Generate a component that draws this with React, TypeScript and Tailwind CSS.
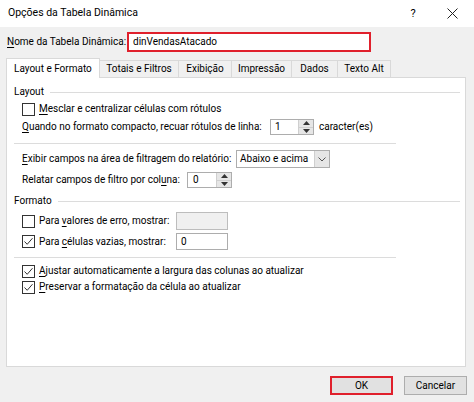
import React from "react";

const font = { fontFamily: 'Roboto, "Noto Sans", sans-serif' };

function CheckBox({ checked }: { checked?: boolean }) {
  return (
    <span className="w-[13px] h-[13px] border border-[#333] bg-white flex items-center justify-center shrink-0">
      {checked && (
        <svg width="11" height="11" viewBox="0 0 11 11">
          <path d="M1.5 5.5 L4.2 8.3 L9.5 2.2" fill="none" stroke="#333" strokeWidth="1" />
        </svg>
      )}
    </span>
  );
}

function Spinner() {
  return (
    <div className="w-[15px] h-full flex flex-col bg-[#e6e6e6] border-l border-[#cfcfcf]">
      <div className="flex-1 flex items-center justify-center border-b border-[#cfcfcf]">
        <svg width="7" height="4" viewBox="0 0 7 4">
          <path d="M0 4 L3.5 0 L7 4 Z" fill="#333" />
        </svg>
      </div>
      <div className="flex-1 flex items-center justify-center">
        <svg width="7" height="4" viewBox="0 0 7 4">
          <path d="M0 0 L3.5 4 L7 0 Z" fill="#333" />
        </svg>
      </div>
    </div>
  );
}

function U({ children }: { children: React.ReactNode }) {
  return <span className="underline underline-offset-2">{children}</span>;
}

function GroupTitle({ title }: { title: string }) {
  return (
    <div className="h-[16px] flex items-center pl-[7px] pr-[5px]">
      <span>{title}</span>
      <div className="flex-1 h-px bg-[#dcdcdc] ml-[6px]" />
    </div>
  );
}

function CheckRow({ checked, children }: { checked?: boolean; children: React.ReactNode }) {
  return (
    <div className="h-[16px] flex items-center pl-[15px] gap-[4px]">
      <CheckBox checked={checked} />
      <span>{children}</span>
    </div>
  );
}

const tabs = [
  { label: "Totais e Filtros", w: "w-[79px]" },
  { label: "Exibição", w: "w-[53px]" },
  { label: "Impressão", w: "w-[60px]" },
  { label: "Dados", w: "w-[46px]" },
  { label: "Texto Alt", w: "w-[53px]" },
];

export default function App() {
  return (
    <div
      className="w-[474px] h-[402px] bg-[#f0f0f0] flex flex-col text-[10px] text-black leading-none whitespace-nowrap"
      style={font}
    >
      <div className="h-[27px] bg-white flex items-center pl-[8px] text-[10.5px]">
        <span className="flex-1">Opções da Tabela Dinâmica</span>
        <span className="w-[10px] text-center mr-[29px] text-[11px]">?</span>
        <svg width="11" height="11" viewBox="0 0 11 11" className="mr-[16px]">
          <path d="M0.5 0.5 L10.5 10.5 M10.5 0.5 L0.5 10.5" stroke="#222" strokeWidth="1" />
        </svg>
      </div>

      <div className="flex items-center mt-[5px] h-[20px] pl-[7px]">
        <span className="w-[120px]">
          <U>N</U>ome da Tabela Dinâmica:
        </span>
        <div className="w-[244px] h-[20px] border-2 border-[#e0202c] bg-white flex items-center pl-[4px]">
          dinVendasAtacado
        </div>
      </div>

      <div className="flex items-end mt-[6px] pl-[6px] h-[19px]">
        <div className="w-[94px] h-[20px] bg-white border border-b-0 border-[#d9d9d9] flex items-center pl-[7px] relative top-px z-10">
          Layout e Formato
        </div>
        {tabs.map((t) => (
          <div
            key={t.label}
            className={`${t.w} h-[17px] border border-l-0 border-b-0 border-[#d9d9d9] flex items-center justify-center`}
          >
            {t.label}
          </div>
        ))}
      </div>

      <div className="mx-[6px] w-[460px] h-[290px] bg-white border border-[#d9d9d9] flex flex-col pt-[6px]">
        <GroupTitle title="Layout" />
        <div className="mt-[1px]">
          <CheckRow>
            <U>M</U>esclar e centralizar células com rótulos
          </CheckRow>
        </div>
        <div className="mt-[2px] h-[16px] flex items-center pl-[15px]">
          <span className="w-[248px]">
            <U>Q</U>uando no formato compacto, recuar rótulos de linha:
          </span>
          <div className="w-[44px] h-[16px] border border-[#adadad] flex">
            <span className="flex-1 pl-[4px] flex items-center">1</span>
            <Spinner />
          </div>
          <span className="ml-[5px]">caracter(es)</span>
        </div>
        <div className="mt-[8px] ml-[7px] w-[382px] h-px bg-[#dcdcdc]" />
        <div className="mt-[6px] h-[18px] flex items-center pl-[15px]">
          <span className="w-[214px]">
            <U>E</U>xibir campos na área de filtragem do relatório:
          </span>
          <div className="w-[94px] h-[18px] border border-[#adadad] flex">
            <span className="flex-1 pl-[3px] flex items-center">Abaixo e acima</span>
            <div className="w-[15px] bg-[#e6e6e6] border-l border-[#cfcfcf] flex items-center justify-center">
              <svg width="8" height="5" viewBox="0 0 8 5">
                <path d="M0.5 0.5 L4 4 L7.5 0.5" fill="none" stroke="#555" strokeWidth="1" />
              </svg>
            </div>
          </div>
        </div>
        <div className="mt-[4px] h-[16px] flex items-center pl-[15px]">
          <span className="w-[165px]">
            Relatar campos de filtro por col<U>u</U>na:
          </span>
          <div className="w-[45px] h-[16px] border border-[#adadad] flex">
            <span className="flex-1 pl-[5px] flex items-center">0</span>
            <Spinner />
          </div>
        </div>
        <div className="mt-[5px]">
          <GroupTitle title="Formato" />
        </div>
        <div className="mt-[3px] h-[18px] flex items-center pl-[15px]">
          <CheckBox />
          <span className="w-[141px] pl-[4px]">
            Para <U>v</U>alores de erro, mostrar:
          </span>
          <div className="w-[52px] h-[18px] border border-[#bdbdbd] bg-[#f0f0f0]" />
        </div>
        <div className="mt-[3px] h-[17px] flex items-center pl-[15px]">
          <CheckBox checked />
          <span className="w-[141px] pl-[4px]">
            Para <U>c</U>élulas vazias, mostrar:
          </span>
          <div className="w-[52px] h-[17px] border border-[#adadad] flex items-center pl-[4px]">0</div>
        </div>
        <div className="mt-[7px] ml-[7px] w-[382px] h-px bg-[#dcdcdc]" />
        <div className="mt-[5px]">
          <CheckRow checked>
            <U>A</U>justar automaticamente a largura das colunas ao atualizar
          </CheckRow>
        </div>
        <CheckRow checked>
          <U>P</U>reservar a formatação da célula ao atualizar
        </CheckRow>
      </div>

      <div className="flex justify-end gap-[11px] pr-[7px] mt-[9px]">
        <div className="w-[63px] h-[19px] border-2 border-[#e0202c] bg-[#e1e1e1] flex items-center justify-center">
          OK
        </div>
        <div className="w-[63px] h-[19px] border border-[#adadad] bg-[#e1e1e1] flex items-center justify-center">
          Cancelar
        </div>
      </div>
    </div>
  );
}
